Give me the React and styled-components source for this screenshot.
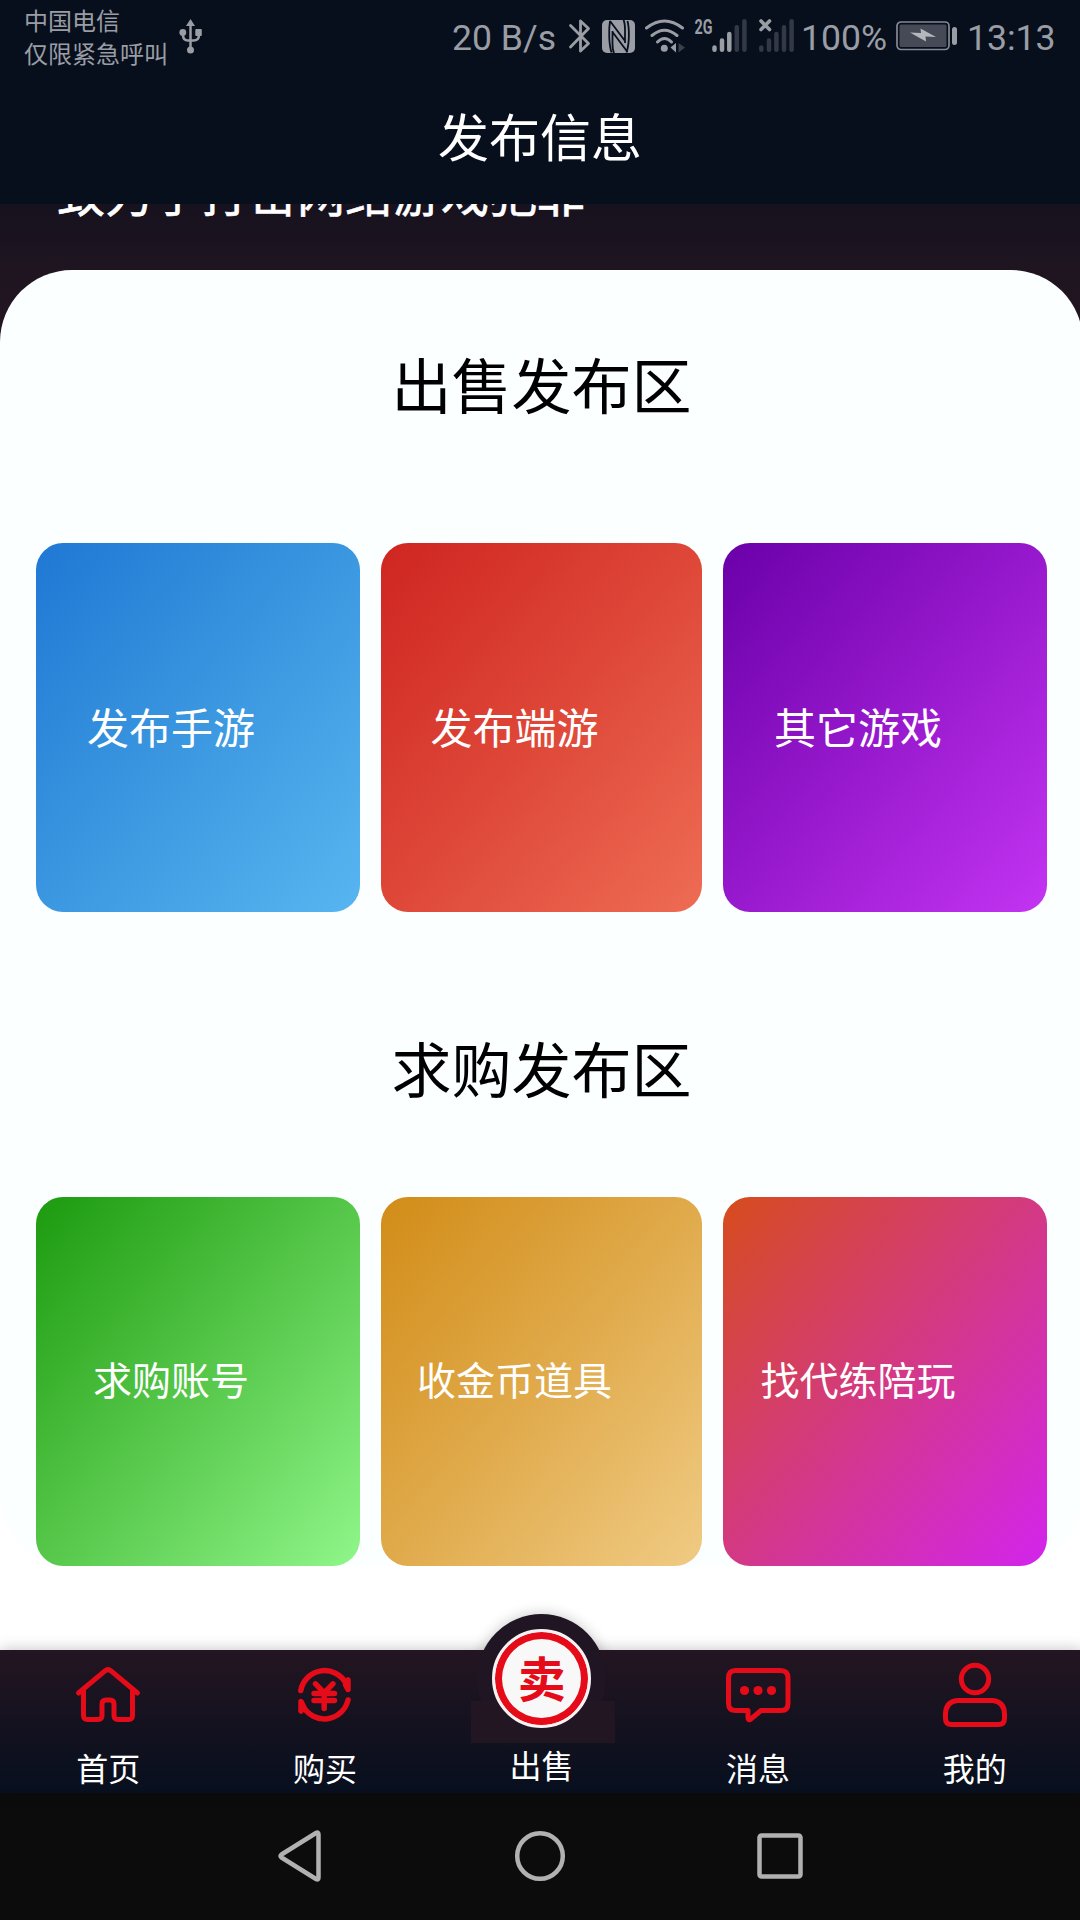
import styled, { createGlobalStyle } from 'styled-components'

const saleCards = [
  { label: '发布手游', from: '#1f78d4', mid: '#3b97e0', to: '#57b6f0' },
  { label: '发布端游', from: '#cf2521', mid: '#de4738', to: '#ee6c54' },
  { label: '其它游戏', from: '#6a00a9', mid: '#9719cd', to: '#c334f2' },
]

const buyCards = [
  { label: '求购账号', from: '#1c9a0f', mid: '#56c74a', to: '#90f68a' },
  { label: '收金币道具', from: '#d28c17', mid: '#e0aa4b', to: '#f0cb84' },
  { label: '找代练陪玩', from: '#d64c1c', mid: '#d33984', to: '#d324ee' },
]

const App = () => {
  return (
    <Screen>
      <GlobalStyle />
      <StatusBar />
      <Header>发布信息</Header>
      <Banner>
        <Tagline>致力于打击网络游戏犯罪</Tagline>
      </Banner>
      <Content>
        <Panel>
          <PanelTitle $gap={96}>出售发布区</PanelTitle>
          <CardRow>
            {saleCards.map((c) => (
              <Card key={c.label} $from={c.from} $mid={c.mid} $to={c.to} $size={42} $lift={5}>{c.label}</Card>
            ))}
          </CardRow>
          <PanelTitle $gap={66}>求购发布区</PanelTitle>
          <CardRow>
            {buyCards.map((c) => (
              <Card key={c.label} $from={c.from} $mid={c.mid} $to={c.to} $size={39} $lift={8}>{c.label}</Card>
            ))}
          </CardRow>
        </Panel>
      </Content>
      <TabBar />
      <SystemNav />
    </Screen>
  )
}

export default App

const StatusBar = () => {
  return (
    <StatusWrapper>
      <Carrier>
        <span>中国电信</span>
        <span>仅限紧急呼叫</span>
      </Carrier>
      <UsbIcon />
      <Speed>20 B/s</Speed>
      <StatusIcons />
      <Percent>100%</Percent>
      <BatteryIcon />
      <Clock>13:13</Clock>
    </StatusWrapper>
  )
}

const UsbIcon = () => (
  <Icon width="24" height="36" viewBox="0 0 24 36">
    <path d="M11.500 5V31M4 13v4q0 5.500 5 5.500h5.500q5.500 0 5.500-5.500v-4" fill="none" stroke="#9a9da4" strokeWidth="2.500" />
    <path d="M11.500 1l4.500 7H7z" fill="#9a9da4" />
    <circle cx="3.800" cy="14.500" r="3.400" fill="#9a9da4" />
    <rect x="16.300" y="11" width="6.500" height="7" rx="1" fill="#9a9da4" />
    <circle cx="11.500" cy="32" r="3.500" fill="#9a9da4" />
  </Icon>
)

// bluetooth, nfc, wifi and the two sim signals
const StatusIcons = () => (
  <Icon width="226" height="40" viewBox="0 0 226 40">
    <path d="M2.500 9.500L20.500 27.500l-8 7.500V5l8 7.500L2.500 31" fill="none" stroke="#9a9da4" strokeWidth="2.800" strokeLinecap="round" strokeLinejoin="round" />
    <rect x="34" y="4" width="33" height="33" rx="5" fill="#9a9da4" />
    <path d="M42 5c-1.500 9-1 24 1.500 31.500M59.500 5c2 8 2 23-1 31.500M44.500 15v13c0 4 .5 7 1.500 9M57 27V14c0-4-.5-8-1.500-10M42 5l15 20M44.500 16l15 20" fill="none" stroke="#08101f" strokeWidth="1.800" />
    <g fill="none" stroke="#9a9da4" strokeWidth="3" strokeLinecap="round">
      <path d="M78.500 12q18-14 36 0M84 19.500q12.500-10.500 25 0M89.500 26q7-7 14 0" />
    </g>
    <circle cx="96.300" cy="32.200" r="3.500" fill="#9a9da4" />
    <path d="M108 27v9.500l-5.500-5z" fill="#9a9da4" />
    <path d="M110.500 27v9.500l6.500-5z" fill="#3a404c" />
    <text x="126.500" y="18.200" fontFamily="Roboto, sans-serif" fontWeight="700" fontSize="20.500" textLength="18" lengthAdjust="spacingAndGlyphs" fill="#9a9da4">2G</text>
    <g stroke="#9a9da4" strokeWidth="4.500" strokeLinecap="round">
      <path d="M146.500 31.500v2.300M154 24.500v9.300M161.300 18v15.800" />
      <path d="M168.800 11.200v22.600M176.400 5.300v28.500" stroke="#323945" />
      <path d="M193.300 31.500v2.300M201 24.500v9.300M208.400 18v15.800M216 11.200v22.600M223.600 5.300v28.500" stroke="#323945" />
    </g>
    <path d="M193 5l8.500 8.500M201.500 5L193 13.500" stroke="#9a9da4" strokeWidth="3.600" strokeLinecap="round" />
  </Icon>
)

const BatteryIcon = () => (
  <Icon width="62" height="32" viewBox="0 0 62 32">
    <rect x="1" y="2" width="52" height="27.500" rx="4" fill="none" stroke="#858992" strokeWidth="1.700" />
    <rect x="3.500" y="4.500" width="47" height="22.500" rx="1.500" fill="#454a56" />
    <path d="M14 12.500l11 .5-.5-4.500L40 17l-10.500-.5.500 5z" fill="#b5b7bc" />
    <rect x="56" y="7" width="5" height="18" rx="2.500" fill="#9a9da4" />
  </Icon>
)

const TabBar = () => {
  return (
    <TabBarWrapper>
      <Tab>
        <HomeIcon />
        首页
      </Tab>
      <Tab>
        <TradeIcon />
        购买
      </Tab>
      <SellTab>
        <Bump />
        <Pedestal />
        <SellBadge>卖</SellBadge>
        出售
      </SellTab>
      <Tab>
        <MessageIcon />
        消息
      </Tab>
      <Tab>
        <MineIcon />
        我的
      </Tab>
    </TabBarWrapper>
  )
}

const HomeIcon = () => (
  <TabIcon viewBox="0 0 72 72">
    <path d="M6.500 31L33 8.800q3-2.500 6 0L65.500 31M11.500 28v25.500q0 4 4 4H26q4 0 4-4V42q0-4 4-4h4q4 0 4 4v11.500q0 4 4 4h10.500q4 0 4-4V28" />
  </TabIcon>
)

const TradeIcon = () => (
  <TabIcon viewBox="0 0 72 72" $width={5.5}>
    <path d="M11.800 28.500A24.200 24.200 0 0 1 57 21.500M59 38A24.200 24.200 0 0 1 14 44M59 18v9.500l-2.500-5zM12 49V39.500l2.500 5z" />
    <path d="M26.500 21.800l8.700 9 8.700-9M25 31.500h20.500M25 38.500h20.500M35.200 31v15.500" />
  </TabIcon>
)

const MessageIcon = () => (
  <TabIcon viewBox="0 0 72 72">
    <path d="M13.500 8.500h45q7.500 0 7.500 7.500v25.500q0 7-7 7H39L28.500 57.300q-2.500 1.500-2.500-1.500v-7.300H14q-7.500 0-7.500-7V16q0-7.500 7-7.500z" />
    <g fill="#e60b18" stroke="none">
      <circle cx="22.500" cy="28.500" r="4.600" />
      <circle cx="36" cy="28.500" r="4.600" />
      <circle cx="49.500" cy="28.500" r="4.600" />
    </g>
  </TabIcon>
)

const MineIcon = () => (
  <TabIcon viewBox="0 0 72 72">
    <circle cx="36" cy="17" r="13.700" />
    <path d="M18.500 38.500h35q12 1 12 14v4q0 6-6 6h-47q-6 0-6-6v-4q0-13 12-14z" />
  </TabIcon>
)

const SystemNav = () => {
  return (
    <NavWrapper>
      <NavIcon viewBox="0 0 60 60">
        <path d="M48.500 8.500v43q0 3-2.500 1.500L11.500 31.500q-2-1.500 0-3L46 7q2.500-1.500 2.500 1.500z" />
      </NavIcon>
      <NavIcon viewBox="0 0 60 60">
        <circle cx="30" cy="30" r="22.800" />
      </NavIcon>
      <NavIcon viewBox="0 0 60 60">
        <rect x="9.500" y="9.500" width="41" height="41" rx="2" />
      </NavIcon>
    </NavWrapper>
  )
}

const GlobalStyle = createGlobalStyle`
  * {
    box-sizing: border-box;
  }

  body {
    margin: 0;
    font-family: Roboto, 'Noto Sans CJK SC', sans-serif;
  }
`

const Screen = styled.div`
  display: flex;
  flex-direction: column;
  width: 1080px;
  height: 1920px;
  overflow: hidden;
  background: #fff;
`

const StatusWrapper = styled.div`
  display: flex;
  align-items: center;
  flex-shrink: 0;
  height: 72px;
  padding: 0 24px;
  background: #070f1d;
  color: #9a9da4;
  font-size: 35.600px;
  white-space: nowrap;
`

const Icon = styled.svg`
  flex-shrink: 0;
`

const Carrier = styled.div`
  display: flex;
  flex-direction: column;
  width: 155px;
  padding-bottom: 1px;
  font-family: 'Noto Sans CJK SC', sans-serif;
  font-size: 24px;
  line-height: 33px;
`

const Speed = styled.span`
  width: 116px;
  margin-left: 249px;
  padding-top: 3px;
`

const Percent = styled.span`
  width: 95px;
  margin-left: 7px;
  padding-top: 3px;
`

const Clock = styled.span`
  margin-left: 9px;
  padding-top: 3px;
`

const Header = styled.header`
  flex-shrink: 0;
  height: 132px;
  background: #070f1d;
  color: #fff;
  font-family: 'Noto Sans CJK SC', sans-serif;
  font-size: 51px;
  line-height: 126px;
  text-align: center;
`

const Banner = styled.div`
  display: flex;
  align-items: flex-start;
  flex-shrink: 0;
  height: 66px;
  padding-left: 57px;
  overflow: hidden;
  background: linear-gradient(#17121f, #1e1520);
`

const Tagline = styled.p`
  margin: -45px 0 0;
  color: #fff;
  font-family: 'Noto Sans CJK SC', sans-serif;
  font-size: 48px;
  font-weight: 400;
  line-height: 64px;
  -webkit-text-stroke: 0.6px #fff;
`

const Content = styled.main`
  flex: 1;
  background: linear-gradient(#1e1520, #231521 80px, #fff 80px);
`

const Panel = styled.section`
  width: 1083px;
  height: 1296px;
  padding: 68px 36px 0;
  border-radius: 72px;
  background: #fcffff;
`

const PanelTitle = styled.h2`
  height: ${({ $gap }) => $gap + 109}px;
  margin: 0;
  color: #000;
  font-family: 'Noto Sans CJK SC', sans-serif;
  font-size: 60px;
  font-weight: 400;
  line-height: 90px;
  text-align: center;
`

const CardRow = styled.div`
  display: grid;
  grid-template-columns: 324px 321px 324px;
  gap: 21px;
  margin-bottom: 110px;
`

const Card = styled.button`
  height: 369px;
  padding: 0 54px ${({ $lift }) => $lift}px 0;
  border: 0;
  border-radius: 27px;
  background: linear-gradient(to bottom right, ${({ $from }) => $from}, ${({ $mid }) => $mid}, ${({ $to }) => $to});
  color: #fff;
  font-family: 'Noto Sans CJK SC', sans-serif;
  font-size: ${({ $size }) => $size}px;
  white-space: nowrap;
`

const TabBarWrapper = styled.nav`
  position: relative;
  display: grid;
  grid-template-columns: repeat(5, 1fr);
  flex-shrink: 0;
  width: 1083px;
  height: 143px;
  background: linear-gradient(#231521, #070f1e);
  box-shadow: 0 0 14px rgba(0, 0, 0, 0.25);
  color: #fff;
  font-family: 'Noto Sans CJK SC', sans-serif;
  font-size: 32px;
  line-height: 48px;
`

const Tab = styled.div`
  display: flex;
  flex-direction: column;
  align-items: center;
  gap: 9px;
  padding-top: 12px;
`

const TabIcon = styled.svg`
  width: 72px;
  height: 72px;
  fill: none;
  stroke: #e60b18;
  stroke-width: ${({ $width }) => $width || 5};
  stroke-linecap: round;
  stroke-linejoin: round;
`

const SellTab = styled.div`
  position: relative;
  display: flex;
  flex-direction: column;
  align-items: center;
  justify-content: flex-end;
  padding-bottom: 5px;
`

const Bump = styled.div`
  position: absolute;
  top: -36px;
  left: 44px;
  width: 129px;
  height: 129px;
  border-radius: 50%;
  background: #201522;

  &::before {
    content: '';
    position: absolute;
    inset: 0;
    border-radius: 50%;
    box-shadow: 0 0 14px rgba(0, 0, 0, 0.22);
    clip-path: inset(-16px -16px 93px -16px);
  }
`

const Pedestal = styled.div`
  position: absolute;
  top: 51px;
  left: 38px;
  width: 144px;
  height: 42px;
  background: #231623;
`

const SellBadge = styled.div`
  position: absolute;
  top: -21px;
  left: 59px;
  display: flex;
  align-items: center;
  justify-content: center;
  width: 99px;
  height: 99px;
  padding-bottom: 6px;
  border: 3px solid #f7f3f4;
  border-radius: 50%;
  background: #f8f8f8;
  box-shadow: inset 0 0 0 7px #e60b18;
  color: #e60b18;
  font-size: 48px;
  font-weight: 700;
`

const NavWrapper = styled.footer`
  display: flex;
  align-items: center;
  justify-content: center;
  gap: 180px;
  flex-shrink: 0;
  height: 127px;
  padding-bottom: 1px;
  background: #0c0c0c;
`

const NavIcon = styled.svg`
  width: 60px;
  height: 60px;
  fill: none;
  stroke: #b1b1b1;
  stroke-width: 4.5;
  stroke-linejoin: round;
`
